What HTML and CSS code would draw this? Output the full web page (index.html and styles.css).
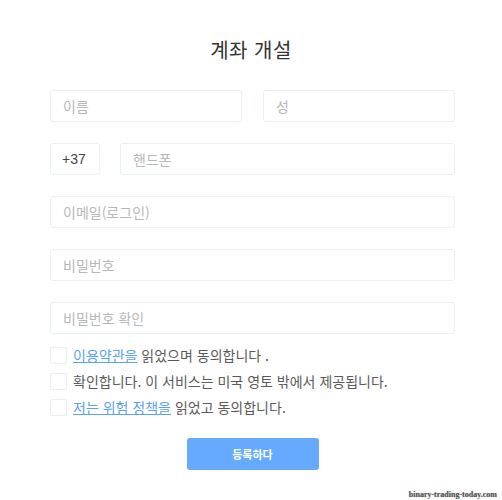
FILE: index.html
```html
<!DOCTYPE html>
<html lang="ko">
<head>
<meta charset="utf-8">
<link rel="stylesheet" href="styles.css">
</head>
<body>
<div class="page">
  <h1 class="title">계좌 개설</h1>
  <form class="form">
    <div class="row two">
      <div class="field"><span class="ph">이름</span></div>
      <div class="field"><span class="ph">성</span></div>
    </div>
    <div class="row phone">
      <div class="field code"><span class="val">+37</span></div>
      <div class="field"><span class="ph">핸드폰</span></div>
    </div>
    <div class="row"><div class="field"><span class="ph">이메일(로그인)</span></div></div>
    <div class="row"><div class="field"><span class="ph">비밀번호</span></div></div>
    <div class="row"><div class="field"><span class="ph">비밀번호 확인</span></div></div>
    <div class="checks">
      <label class="check"><span class="box"></span><span><a class="link">이용약관을</a> 읽었으며 동의합니다 .</span></label>
      <label class="check"><span class="box"></span><span>확인합니다. 이 서비스는 미국 영토 밖에서 제공됩니다.</span></label>
      <label class="check"><span class="box"></span><span><a class="link">저는 위험 정책을</a> 읽었고 동의합니다.</span></label>
    </div>
    <div class="actions"><span class="btn">등록하다</span></div>
  </form>
  <div class="watermark">binary-trading-today.com</div>
</div>
</body>
</html>
```
FILE: styles.css
```css
* { box-sizing: border-box; }
html, body { margin: 0; padding: 0; background: #fff; }
body { font-family: "Noto Sans CJK KR", "Noto Sans", sans-serif; color: #444; }
.page { width: 502px; height: 500px; position: relative; padding-top: 36px; }
.title { margin: 0; text-align: center; font-size: 20px; font-weight: 400; color: #333; line-height: 28px; letter-spacing: 0.5px; }
.form { margin: 26px 0 0 50px; width: 405px; }
.row { display: flex; gap: 21px; margin-bottom: 21px; }
.row.two .field { flex: 1; }
.row.phone { gap: 20px; }
.field { flex: 1; height: 32px; border: 1px solid #e8f1f4; border-radius: 3px; display: flex; align-items: center; padding-left: 12px; font-size: 14px; }
.field.code { flex: 0 0 50px; padding-left: 11px; }
.ph { color: #b8b8b8; }
.val { color: #444; font-family: "Liberation Sans", sans-serif; font-size: 14px; }
.checks { margin-top: -10px; display: flex; flex-direction: column; gap: 6px; }
.check { display: flex; align-items: center; gap: 6px; font-size: 14px; color: #5a5a5a; line-height: 20px; }
.box { width: 17px; height: 17px; border: 1px solid #e8eef2; border-radius: 2px; flex: none; }
.link { color: #5aa2f5; text-decoration: underline; }
.actions { display: flex; justify-content: center; margin-top: 21px; }
.btn { width: 132px; height: 32px; background: #66aaff; border-radius: 3px; color: #fff; font-size: 11px; font-weight: 700; display: flex; align-items: center; justify-content: center; }
.watermark { position: absolute; right: 5px; bottom: 1px; font-family: "Liberation Serif", serif; font-size: 8px; font-weight: 700; color: #555; text-shadow: 0 0 1px #999; }
```
